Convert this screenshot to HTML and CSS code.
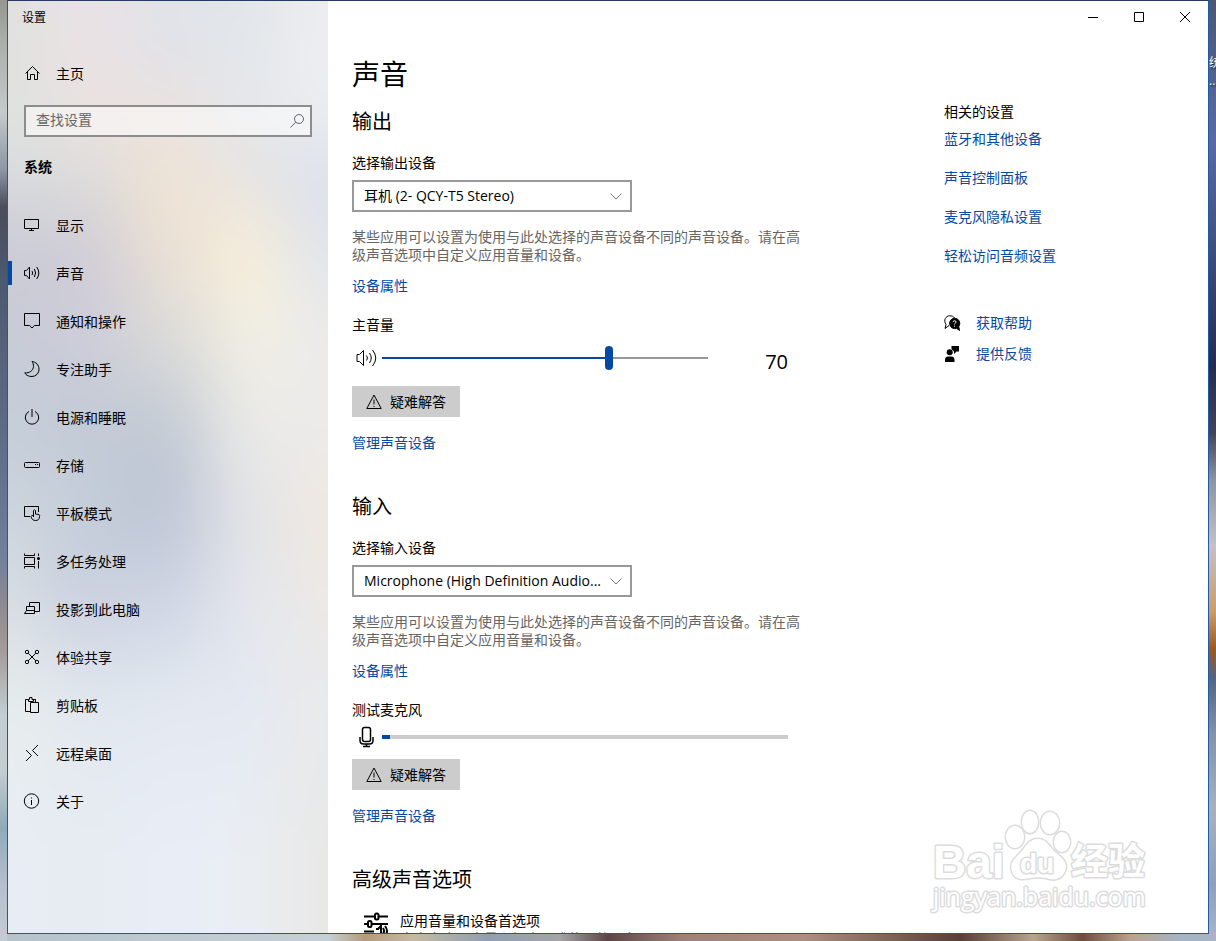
FILE: index.html
```html
<!DOCTYPE html>
<html lang="zh-CN">
<head>
  <meta charset="UTF-8">
  <meta name="viewport" content="width=device-width, initial-scale=1.0">
  <link rel="stylesheet" href="styles.css">
  <title>设置</title>
</head>
<body>

<div class="desktop-label">统<br>...</div>

<div class="window">
  <aside class="sidebar">
    <div class="app-title">设置</div>

    <a class="nav-link home" href="#home">
      <svg class="icon" viewBox="0 0 16 16"><path d="M1.500 8.500 8.500 1.500 15.500 8.500M3.500 7V14.500H6.500V9.500H10.500V14.500H13.500V7"/></svg>
      <span>主页</span>
    </a>

    <form class="search">
      <input type="text" placeholder="查找设置" aria-label="查找设置">
      <button type="button" aria-label="搜索">
        <svg class="icon" viewBox="0 0 16 16"><circle cx="10" cy="6" r="4.500"/><path d="M6.800 9.200 1.500 14.500"/></svg>
      </button>
    </form>

    <h2 class="nav-heading">系统</h2>

    <nav>
      <a class="nav-link" href="#display">
        <svg class="icon" viewBox="0 0 16 16"><path d="M.5 2.500H14.500V11.500H.5zM7.500 11.500V13.500M5 13.500H10"/></svg>
        <span>显示</span>
      </a>
      <a class="nav-link active" href="#sound">
        <svg class="icon" viewBox="0 0 16 16"><path d="M.5 5.500H2.500L5.500 2V14L2.500 10.500H.5zM8 6Q9.500 8 8 10M10.300 4Q13 8 10.300 12M12.700 2Q17 8 12.700 14"/></svg>
        <span>声音</span>
      </a>
      <a class="nav-link" href="#notifications">
        <svg class="icon" viewBox="0 0 16 16"><path d="M.5 .5H15.500V12.500H10.500L8 15 5.500 12.500H.5z"/></svg>
        <span>通知和操作</span>
      </a>
      <a class="nav-link" href="#focus">
        <svg class="icon" viewBox="0 0 16 16"><path d="M8 .5C12 1 15 4 15 8A7 7 0 0 1 8 15.500C5 15.500 2 14.500 .8 11.800C5 12.500 9.500 9.500 9.500 5.500C9.500 3.500 9 2 8 .5z"/></svg>
        <span>专注助手</span>
      </a>
      <a class="nav-link" href="#power">
        <svg class="icon" viewBox="0 0 16 16"><path d="M8 0V8M5 2.500A6.700 6.700 0 1 0 11 2.500"/></svg>
        <span>电源和睡眠</span>
      </a>
      <a class="nav-link" href="#storage">
        <svg class="icon" viewBox="0 0 16 16"><rect x=".5" y="5.500" width="15" height="5" rx="1"/><path d="M11 7.500H12M13 7.500H14"/></svg>
        <span>存储</span>
      </a>
      <a class="nav-link" href="#tablet">
        <svg class="icon" viewBox="0 0 16 16"><path d="M6 11.500H.5V1.500H14.500V7M9.500 12V5.500Q10.500 4 11.500 5.500V9L15 9.500Q16 10 15.500 11.500C15.500 14.500 14 15.500 11.500 15.500C9 15.500 7.500 14 7 11.500Q7.500 9.500 9.500 11"/></svg>
        <span>平板模式</span>
      </a>
      <a class="nav-link" href="#multitask">
        <svg class="icon" viewBox="0 0 16 16"><path d="M.5 .5V2.500H10.500V.5M.5 15.500V13.500H10.500V15.500M.5 4.500H10.500V11.500H.5zM14.500 .5V3M14.500 8V15.500"/><circle class="solid-only" cx="14.500" cy="5.500" r="1.500"/></svg>
        <span>多任务处理</span>
      </a>
      <a class="nav-link" href="#projecting">
        <svg class="icon" viewBox="0 0 16 16"><path d="M5.500 5.500V1.500H15.500V10.500H10.500M2.500 9.500V5.500H10.500V12.500M2.500 9.500H10.500M2.500 9.500.5 12.500H10.500"/></svg>
        <span>投影到此电脑</span>
      </a>
      <a class="nav-link" href="#shared">
        <svg class="icon" viewBox="0 0 16 16"><circle cx="3" cy="3" r="1.700"/><circle cx="13" cy="3" r="1.700"/><circle cx="3" cy="13" r="1.700"/><circle cx="13" cy="13" r="1.700"/><path d="M4.200 4.200 11.800 11.800M11.800 4.200 4.200 11.800"/></svg>
        <span>体验共享</span>
      </a>
      <a class="nav-link" href="#clipboard">
        <svg class="icon" viewBox="0 0 16 16"><path d="M6 14.500H1.500V2.500H4.500M9 2.500H11.500V5.500M4.500 4.500V2.500H5.500V.5H8V2.500H9.500V4.500zM6.500 5.500H14.500V15.500H6.500z"/></svg>
        <span>剪贴板</span>
      </a>
      <a class="nav-link" href="#remote">
        <svg class="icon" viewBox="0 0 16 16"><path d="M2 5 7.500 10.500 2 16M14 0 8.500 5.500 14 11"/></svg>
        <span>远程桌面</span>
      </a>
      <a class="nav-link" href="#about">
        <svg class="icon" viewBox="0 0 16 16"><circle cx="7.500" cy="8" r="7.200"/><path d="M7.500 7V12M7.500 4.500V5.500"/></svg>
        <span>关于</span>
      </a>
    </nav>
  </aside>

  <main class="main">
    <div class="titlebar">
      <button type="button" aria-label="最小化"><svg class="icon small" viewBox="0 0 10 10"><path d="M0 5.500H10"/></svg></button>
      <button type="button" aria-label="最大化"><svg class="icon small" viewBox="0 0 10 10"><path d="M.5 .5H9.500V9.500H.5z"/></svg></button>
      <button type="button" aria-label="关闭"><svg class="icon small" viewBox="0 0 10 10"><path d="M0 0 10 10M10 0 0 10"/></svg></button>
    </div>

    <div class="page">
      <div class="content">
        <h1>声音</h1>

        <section>
          <h2>输出</h2>
          <label for="outputDevice">选择输出设备</label>
          <div class="select-box">
            <select id="outputDevice">
              <option>耳机 (2- QCY-T5 Stereo)</option>
            </select>
            <svg class="chevron" viewBox="0 0 12 7"><path d="M.5 .5 6 6 11.500 .5"/></svg>
          </div>
          <p class="hint">某些应用可以设置为使用与此处选择的声音设备不同的声音设备。请在高级声音选项中自定义应用音量和设备。</p>
          <a class="link" href="#output-properties">设备属性</a>

          <label class="level-label" for="volume">主音量</label>
          <div class="volume-row">
            <svg class="icon large" viewBox="0 0 22 22"><path d="M1 7.500H3.500L7.500 3.500V18.500L3.500 14.500H1zM10.500 8.500Q12.500 11 10.500 13.500M13.500 6Q17 11 13.500 16M16.500 3Q23 11 16.500 19"/></svg>
            <input type="range" id="volume" min="0" max="100" value="70">
            <output for="volume">70</output>
          </div>
          <button type="button" class="troubleshoot">
            <svg class="icon" viewBox="0 0 16 16"><path d="M8 1 15.200 14.500H.8zM8 5.500V10.500M8 12V13"/></svg>
            疑难解答
          </button>
          <a class="link manage" href="#manage-output">管理声音设备</a>
        </section>

        <section>
          <h2>输入</h2>
          <label for="inputDevice">选择输入设备</label>
          <div class="select-box">
            <select id="inputDevice">
              <option>Microphone (High Definition Audio...</option>
            </select>
            <svg class="chevron" viewBox="0 0 12 7"><path d="M.5 .5 6 6 11.500 .5"/></svg>
          </div>
          <p class="hint">某些应用可以设置为使用与此处选择的声音设备不同的声音设备。请在高级声音选项中自定义应用音量和设备。</p>
          <a class="link" href="#input-properties">设备属性</a>

          <label class="level-label" for="micLevel">测试麦克风</label>
          <div class="mic-row">
            <svg class="icon large mic" viewBox="0 0 22 22"><rect x="6.500" y="1.500" width="8" height="14" rx="2"/><path d="M4 11V14.500Q4 18 7.500 18H13.500Q17 18 17 14.500V11M10.500 18V20.500M7 20.500H14"/></svg>
            <progress id="micLevel" max="100" value="2"></progress>
          </div>
          <button type="button" class="troubleshoot">
            <svg class="icon" viewBox="0 0 16 16"><path d="M8 1 15.200 14.500H.8zM8 5.500V10.500M8 12V13"/></svg>
            疑难解答
          </button>
          <a class="link manage" href="#manage-input">管理声音设备</a>
        </section>

        <section>
          <h2>高级声音选项</h2>
          <a class="option" href="#app-volume">
            <svg class="icon option-icon" viewBox="0 0 24 24"><path d="M0 4.500H10.500M15 4.500H24M0 12H3.500M8 12H24M0 19.500H10M12 17H14L17 14V23M19 16Q21 19 19 22M21 14Q25 19 21 24"/><rect x="11" y="1.500" width="3.500" height="6" rx="1.500"/><rect x="4" y="9" width="3.500" height="6" rx="1.500"/></svg>
            <span>
              <span class="option-name">应用音量和设备首选项</span>
              <span class="option-note">自定义应用音量和扬声器或使用的设备</span>
            </span>
          </a>
        </section>
      </div>

      <div class="related">
        <h3>相关的设置</h3>
        <ul>
          <li><a class="link" href="#bluetooth">蓝牙和其他设备</a></li>
          <li><a class="link" href="#control-panel">声音控制面板</a></li>
          <li><a class="link" href="#mic-privacy">麦克风隐私设置</a></li>
          <li><a class="link" href="#ease-audio">轻松访问音频设置</a></li>
        </ul>
        <a class="link support" href="#help">
          <svg class="icon" viewBox="0 0 16 16"><path d="M5 10.500 1 13.500 2 9.500C-1 5 2 .8 5.500 .8C8 .8 9.500 1.500 10.500 3"/><path class="solid" d="M10.500 3.200A5.200 5.200 0 1 0 12.500 13.300L15.500 15.500 14.800 11.500A5.200 5.200 0 0 0 10.500 3.200z"/><path class="mark" d="M8.800 6.800Q10.500 4.800 12 6.500C12.500 8 10.500 8 10.500 9.500M10.500 10.700V11.700"/></svg>
          <span>获取帮助</span>
        </a>
        <a class="link support" href="#feedback">
          <svg class="icon" viewBox="0 0 16 16"><path class="solid-only" d="M7.500 0H15V5.500H12.500L10 8V5.500L7.500 3zM1 16V14Q1 10.500 4 10.500H7.500Q10.500 10.500 10.500 14V16z"/><circle class="solid-only" cx="5.700" cy="6.200" r="3"/></svg>
          <span>提供反馈</span>
        </a>
      </div>
    </div>
  </main>

  <svg class="watermark" viewBox="0 0 224 112">
    <g class="watermark-shape">
      <text class="wm-latin" x="5" y="72" font-size="46">Bai</text>
      <ellipse cx="102" cy="16" rx="8" ry="11"/>
      <ellipse cx="122" cy="17" rx="9" ry="11"/>
      <ellipse cx="87" cy="31" rx="9" ry="11"/>
      <ellipse cx="134" cy="36" rx="8" ry="10"/>
      <path d="M110 33C119 33 121 41 128 47C136 53 140 58 137 65C133 75 124 74 118 72C112 71 108 71 102 72C95 74 86 74 84 65C81 57 87 53 93 46C98 40 101 33 110 33z"/>
      <text class="wm-latin" x="92" y="67" font-size="28">du</text>
      <text class="wm-cjk" x="143" y="69" font-size="37">经验</text>
      <text class="wm-url" x="5" y="100" font-size="25">jingyan.baidu.com</text>
    </g>
  </svg>
</div>

<script>
  const volume = document.getElementById('volume');

  function updateVolume() {
    volume.style.setProperty('--level', volume.value + '%');
    document.querySelector('output').value = volume.value;
  }

  volume.addEventListener('input', updateVolume);
  updateVolume();
</script>

</body>
</html>
```
FILE: styles.css
```css
* {
  box-sizing: border-box;
}
body {
  margin: 0;
  height: 100vh;
  padding: 0 7px 7px;
  overflow: hidden;
  position: relative;
  font-family: "Open Sans", "Noto Sans CJK SC", sans-serif;
  font-size: 14px;
  line-height: 18px;
  color: #000;
  /* wallpaper: left edge, right edge, then the strip along the bottom */
  background:
    linear-gradient(to bottom, #969592, #a9aea8 4%, #c4c9cb 12%, #8c98a5 18%, #4b4b5b 22%, #4c5a70 30%, #65708c 50%, #70809d 59%, #8c8992 64%, #a49b98 69%, #c2ced2 76%, #c5cccf 82%, #8eabb9 88%, #b5bfce 94%, #c3ccd3) left / 7px 100% no-repeat,
    linear-gradient(to bottom, #4a5970, #5a6aa4 15%, #40507e 26%, #242c4e 39%, #414458 46%, #8b95a2 51%, #c6bfc6 58%, #c99d69 65%, #9c5920 69%, #526480 72%, #8293a7 78%, #a4b2bf 86%, #8f9fb8 94%, #a9b6c8) right / 7px 100% no-repeat,
    linear-gradient(to right, #b5c2cc, #c6cfd6 27%, #b59b7b 30%, #c7b9a3 34%, #91a0b1 40%, #a6a4a6 46%, #5e4548 50%, #9d8178 56%, #ad8e84 66%, #8b7063 71%, #593e39 79%, #b8a48f 85%, #6f4c41 89%, #bba38d 93%, #a6b4c5 97%) #b5c2cc;
}
h1, h2, h3, p, ul {
  margin: 0;
  padding: 0;
  font-weight: normal;
}
h3 {
  font-size: 14px;
}
a {
  color: inherit;
  text-decoration: none;
}
button, input, select {
  font: inherit;
  color: inherit;
}
button {
  border: none;
  background: none;
  padding: 0;
}
.desktop-label {
  position: absolute;
  left: calc(100% - 7px);
  top: 54px;
  color: #fff;
  font-size: 12px;
  text-shadow: 1px 1px 2px #000;
}
.window {
  position: relative;
  display: flex;
  height: 100%;
  overflow: hidden;
  background: #fff;
  border: 1px solid #1f5aa8;
  border-top-color: #263a62;
}

/* icons */
.icon {
  flex: none;
  width: 16px;
  height: 16px;
  fill: none;
  stroke: currentColor;
  overflow: visible;
}
.icon.small {
  width: 10px;
  height: 10px;
}
.icon.large {
  width: 22px;
  height: 22px;
  margin: 0 4px;
}
.icon.mic {
  stroke-width: 1.5px;
}
.solid {
  fill: #000;
}
.solid-only {
  fill: #000;
  stroke: none;
}
.icon .mark {
  stroke: #fff;
}

/* sidebar */
.sidebar {
  flex: none;
  position: relative;
  z-index: 0;
  width: 320px;
  overflow: hidden;
}
/* acrylic backdrop: five colour columns blurred into each other */
.sidebar::before {
  content: "";
  position: absolute;
  z-index: -1;
  inset: -80px;
  background:
    linear-gradient(to bottom, #e0e1df 100px, #dfe4df 180px, #d8dbdf 260px, #c9cad4 330px, #c8ccd7 410px, #c5ced9 510px, #cdd5dd 590px, #d8dde3 680px, #e8eded 780px, #e8edf5 930px) 0 0 / 120px 100% no-repeat,
    linear-gradient(to bottom, #eae2e6 100px, #ece3e1 180px, #dddcda 260px, #cfcbd6 330px, #cecdd9 410px, #c2cad6 510px, #c3cdda 590px, #cad0df 680px, #e2e8ef 780px, #e7ecf2 930px) 120px 0 / 80px 100% no-repeat,
    linear-gradient(to bottom, #dfe3ea 100px, #e8e1e1 180px, #f1e5d3 260px, #ebe0d5 330px, #dcdcd8 410px, #c1c9d4 510px, #bdc4d4 590px, #ced5e4 680px, #e4e9f1 780px, #e9eef7 930px) 200px 0 / 80px 100% no-repeat,
    linear-gradient(to bottom, #e2e6ea 100px, #e4e8ec 180px, #e6e3e2 260px, #f9efd8 330px, #f2efe3 410px, #eaeae8 510px, #e2e4e8 590px, #e4e7ec 680px, #e4e9f2 780px, #eaeef3 930px) 280px 0 / 80px 100% no-repeat,
    linear-gradient(to bottom, #eeeef0 100px, #efeff3 180px, #dae0ed 260px, #e0e4ed 330px, #ecebea 410px, #ecebea 510px, #f1e8df 590px, #ede9e6 680px, #e9eaec 780px, #e8e8e5 930px) 360px 0 / 120px 100% no-repeat;
  filter: blur(32px);
}
.app-title {
  height: 32px;
  padding: 8px 14px 6px;
  font-size: 12px;
}
.nav-link {
  position: relative;
  display: flex;
  align-items: center;
  gap: 16px;
  height: 48px;
  padding: 0 16px;
}
.nav-link span {
  padding-top: 2px;
}
.nav-link.home {
  margin-top: 16px;
}
.nav-link.active::before {
  content: "";
  position: absolute;
  left: 0;
  top: 12px;
  width: 4px;
  height: 24px;
  background: #0549a3;
}
.search {
  display: flex;
  align-items: center;
  height: 32px;
  margin: 8px 16px;
  padding-right: 5px;
  border: 2px solid #8d8d8d;
  background: rgba(255, 255, 255, 0.5);
  color: #666;
}
.search input {
  flex: 1;
  min-width: 0;
  padding: 0 10px 2px;
  border: none;
  background: none;
}
.search input::placeholder {
  color: #666;
}
.search .icon {
  display: block;
}
.nav-heading {
  padding: 13px 16px 25px;
  font-size: 14px;
  font-weight: bold;
}

/* main area */
.main {
  flex: 1;
  min-width: 0;
}
.titlebar {
  display: flex;
  justify-content: flex-end;
}
.titlebar button {
  display: flex;
  align-items: center;
  justify-content: center;
  width: 46px;
  height: 32px;
}
.page {
  display: grid;
  grid-template-columns: minmax(0, 448px) minmax(0, 1fr);
  gap: 144px;
  padding: 23px 24px 0;
}
h1 {
  margin-bottom: 16px;
  font-size: 28px;
  line-height: 36px;
}
.content section {
  margin-bottom: 41px;
}
.content h2 {
  margin-bottom: 18px;
  font-size: 20px;
  line-height: 28px;
}
.content label {
  display: block;
}
.select-box {
  position: relative;
  width: 280px;
  margin: 8px 0 16px;
}
.select-box select {
  display: block;
  width: 100%;
  height: 32px;
  padding: 0 24px 0 10px;
  border: 2px solid #999;
  border-radius: 0;
  background: #fff;
  appearance: none;
}
.chevron {
  position: absolute;
  right: 10px;
  top: 13px;
  width: 12px;
  height: 7px;
  fill: none;
  stroke: #777;
}
.hint {
  margin-bottom: 13px;
  color: #666;
}
.link {
  display: block;
  color: #0549a3;
}
.content .level-label {
  margin-top: 21px;
}
.volume-row,
.mic-row {
  display: flex;
  align-items: center;
  padding-right: 12px;
}
.volume-row {
  height: 48px;
  margin-bottom: 4px;
}
.mic-row {
  height: 36px;
  margin-bottom: 4px;
}
.volume-row input {
  flex: 1;
  min-width: 0;
  height: 24px;
  margin: 0;
  appearance: none;
  background: linear-gradient(to right, #0549a3 var(--level), #999 var(--level)) center / 100% 2px no-repeat;
}
.volume-row input::-webkit-slider-thumb {
  appearance: none;
  width: 8px;
  height: 24px;
  border-radius: 4px;
  background: #0549a3;
}
.volume-row output {
  width: 80px;
  padding-top: 8px;
  text-align: right;
  font-size: 20px;
  line-height: 24px;
}
.mic-row progress {
  flex: 1;
  min-width: 0;
  height: 4px;
  border: none;
  appearance: none;
}
.mic-row progress::-webkit-progress-bar {
  background: #ccc;
}
.mic-row progress::-webkit-progress-value {
  background: #0549a3;
}
.troubleshoot {
  display: flex;
  align-items: center;
  gap: 8px;
  height: 31px;
  padding: 0 14px;
  background: #ccc;
}
.manage {
  margin-top: 17px;
}
.content .option {
  display: flex;
  gap: 12px;
  padding: 0 12px;
}
.option-icon {
  width: 24px;
  height: 24px;
  stroke-width: 2px;
}
.option-name,
.option-note {
  display: block;
}
.option-note {
  color: #666;
}

/* right column */
.related {
  padding-top: 47px;
}
.related ul {
  margin: 9px 0 49px;
  list-style: none;
}
.related li {
  margin-bottom: 21px;
}
.support {
  display: flex;
  align-items: center;
  gap: 16px;
  margin-bottom: 13px;
}
.support .icon {
  color: #000;
}

.watermark {
  position: absolute;
  right: 56px;
  bottom: 15px;
  width: 224px;
  height: 112px;
}
.watermark-shape {
  fill: #fff;
  stroke: #dcdcdc;
  stroke-width: 3px;
  stroke-linejoin: round;
  paint-order: stroke;
}
.wm-latin {
  font-family: "Liberation Sans", sans-serif;
  font-weight: bold;
}
.wm-cjk {
  font-family: "Noto Sans CJK SC", sans-serif;
  font-weight: bold;
}
.wm-url {
  font-family: "Open Sans", sans-serif;
}
```
